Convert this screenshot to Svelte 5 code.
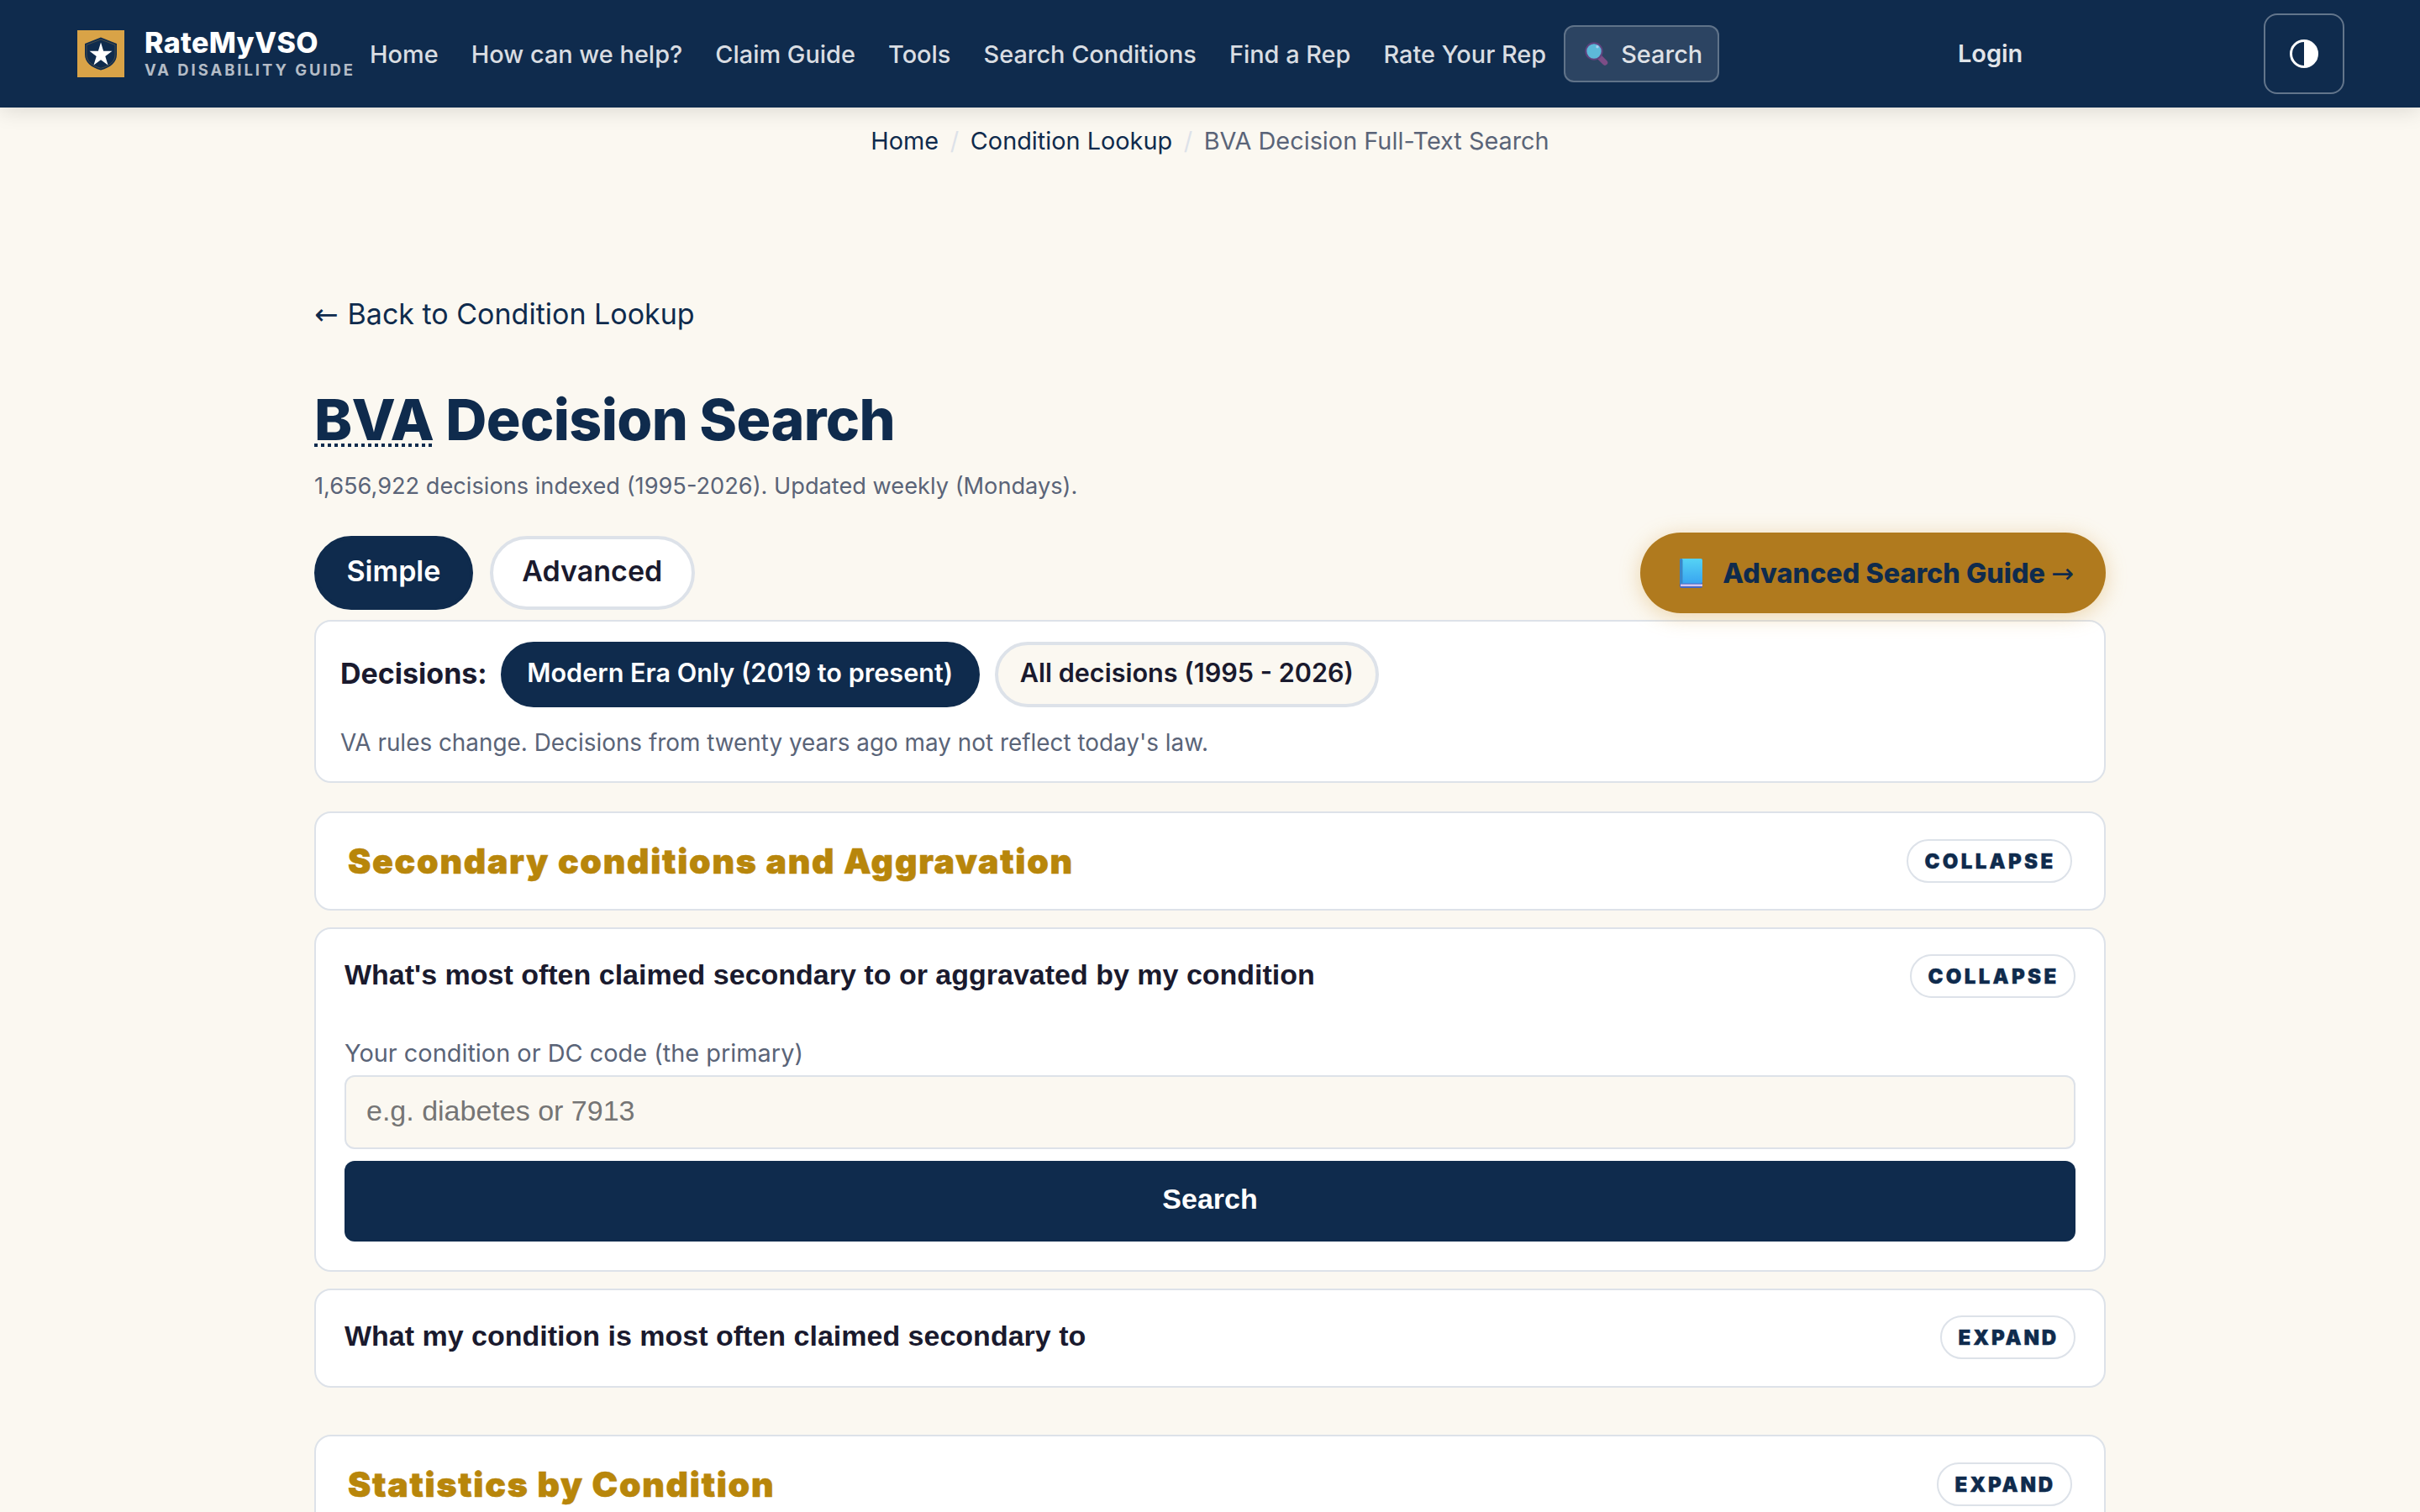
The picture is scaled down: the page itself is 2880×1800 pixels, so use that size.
<script lang="ts">
  const navLinks = ['Home', 'How can we help?', 'Claim Guide', 'Tools', 'Search Conditions', 'Find a Rep', 'Rate Your Rep']

  let mode = $state('simple')
  let era = $state('modern')
  let condition = $state('')
  let secondaryOpen = $state(true)
  let claimedOpen = $state(true)
  let reverseOpen = $state(false)
  let statsOpen = $state(false)
</script>

{#snippet toggle(open: boolean)}
  <span class="toggle" class:open>{open ? 'Collapse' : 'Expand'}</span>
{/snippet}

<header class="site-header">
  <a class="brand" href="#home">
    <svg class="brand-mark" width="56" height="56" viewBox="0 0 56 56">
      <rect width="56" height="56" fill="#d9a347" />
      <path d="M28 8.5 47 16v13c0 9-7.500 15.500-19 18.500C16.500 44.500 9 38 9 29V16Z" fill="#0f2b4d" />
      <path d="M28 11 45 17.500v11.500c0 8-6.500 13.500-17 16.300C17.500 42.500 11 37 11 29V17.500Z" fill="none" stroke="#d9a347" stroke-opacity="0.35" stroke-width="0.8" />
      <path d="m28 14.500 3.100 10.300h10.400l-8.200 6.200 3.200 10.500-8.500-6.300-8.500 6.300 3.200-10.500-8.200-6.200h10.400Z" fill="#fff" />
    </svg>
    <span class="brand-text">
      <span class="brand-name">RateMyVSO</span>
      <span class="brand-sub">VA DISABILITY GUIDE</span>
    </span>
  </a>
  <nav>
    {#each navLinks as link}
      <a class="nav-link" href="#nav">{link}</a>
    {/each}
    <a class="nav-search" href="#search">
      <svg width="30" height="30" viewBox="0 0 30 30">
        <path d="m18.500 19 6.500 6.500" stroke="#7d4d86" stroke-width="6.500" stroke-linecap="round" />
        <circle cx="12" cy="12" r="9.700" fill="#5db9d9" stroke="#60437f" stroke-width="2" />
        <circle cx="16" cy="6.800" r="1.700" fill="#a9cdee" />
      </svg>
      Search
    </a>
  </nav>
  <a class="login" href="#login">Login</a>
  <button class="contrast" aria-label="Toggle theme">
    <svg width="34" height="34" viewBox="0 0 34 34">
      <circle cx="17" cy="17" r="15.500" fill="none" stroke="#fff" stroke-width="3" />
      <path d="M17 1.500a15.500 15.500 0 0 1 0 31Z" fill="#fff" />
    </svg>
  </button>
</header>

<div class="breadcrumb">
  <a href="#home">Home</a>
  <span class="sep">/</span>
  <a href="#lookup">Condition Lookup</a>
  <span class="sep">/</span>
  <span>BVA Decision Full-Text Search</span>
</div>

<main>
  <a class="back" href="#lookup"><span class="arrow">←</span> Back to Condition Lookup</a>
  <h1><abbr>BVA</abbr> Decision Search</h1>
  <p class="indexed">1,656,922 decisions indexed (1995-2026). Updated weekly (Mondays).</p>

  <div class="modes">
    <button class="pill" class:active={mode === 'simple'} onclick={() => (mode = 'simple')}>Simple</button>
    <button class="pill" class:active={mode === 'advanced'} onclick={() => (mode = 'advanced')}>Advanced</button>
    <a class="guide" href="#guide">
      <svg width="27" height="35" viewBox="0 0 27 35">
        <defs>
          <linearGradient id="cover" x1="0" y1="0" x2="0" y2="1">
            <stop offset="0" stop-color="#55d3f5" />
            <stop offset="1" stop-color="#39a5f0" />
          </linearGradient>
        </defs>
        <rect width="27" height="35" rx="2.500" fill="#4467c4" />
        <rect x="1" y="30.500" width="26" height="2.500" fill="#d7c6ee" />
        <rect width="27" height="29.500" rx="2" fill="url(#cover)" />
        <rect width="3.500" height="30" rx="1.500" fill="#3a86c8" />
      </svg>
      <span>Advanced Search Guide <span class="arrow">→</span></span>
    </a>
  </div>

  <section class="card era">
    <div class="era-row">
      <strong>Decisions:</strong>
      <button class="pill small" class:active={era === 'modern'} onclick={() => (era = 'modern')}>Modern Era Only (2019 to present)</button>
      <button class="pill small" class:active={era === 'all'} onclick={() => (era = 'all')}>All decisions (1995 - 2026)</button>
    </div>
    <p>VA rules change. Decisions from twenty years ago may not reflect today's law.</p>
  </section>

  <button class="card group" onclick={() => (secondaryOpen = !secondaryOpen)}>
    <span class="group-title">Secondary conditions and Aggravation</span>
    {@render toggle(secondaryOpen)}
  </button>

  {#if secondaryOpen}
    <section class="card question" class:open={claimedOpen}>
      <button class="question-head" onclick={() => (claimedOpen = !claimedOpen)}>
        <span class="question-text">What's most often claimed secondary to or aggravated by my condition</span>
        {@render toggle(claimedOpen)}
      </button>
      {#if claimedOpen}
        <label for="primary">Your condition or DC code (the primary)</label>
        <input id="primary" type="text" placeholder="e.g. diabetes or 7913" bind:value={condition} />
        <button class="submit">Search</button>
      {/if}
    </section>

    <section class="card question" class:open={reverseOpen}>
      <button class="question-head" onclick={() => (reverseOpen = !reverseOpen)}>
        <span class="question-text">What my condition is most often claimed secondary to</span>
        {@render toggle(reverseOpen)}
      </button>
    </section>
  {/if}

  <button class="card group stats" onclick={() => (statsOpen = !statsOpen)}>
    <span class="group-title">Statistics by Condition</span>
    {@render toggle(statsOpen)}
  </button>
</main>

<style>
  :global(body) {
    background: #fbf8f1;
    color: #1a1a2e;
    font-family: Inter, sans-serif;
    font-size: 34px;
  }

  :global(#app) {
    height: 1800px;
    overflow: hidden;
  }

  * {
    box-sizing: border-box;
  }

  a {
    color: #0f2b4d;
    text-decoration: none;
  }

  button {
    font-family: inherit;
    border: 0;
    padding: 0;
    text-align: left;
  }

  p {
    margin: 0;
  }

  .site-header {
    display: flex;
    align-items: center;
    height: 128px;
    padding: 0 90px 0 92px;
    background: #0f2b4d;
    box-shadow: 0 4px 24px rgba(0, 0, 0, 0.12);
    white-space: nowrap;
  }

  .brand {
    display: flex;
    align-items: center;
    gap: 24px;
    width: 329px;
  }

  .brand-mark {
    flex-shrink: 0;
  }

  .brand-text {
    display: flex;
    flex-direction: column;
    color: #fff;
  }

  .brand-name {
    font-size: 34px;
    font-weight: 800;
    line-height: 38px;
    letter-spacing: 0.34px;
  }

  .brand-sub {
    font-size: 18.4px;
    font-weight: 700;
    line-height: 26px;
    letter-spacing: 2.98px;
    color: rgba(255, 255, 255, 0.7);
  }

  nav {
    display: flex;
    align-items: center;
    flex: 1;
  }

  .nav-link {
    padding: 0 20px 0 19.1px;
    font-size: 28.9px;
    font-weight: 500;
    color: rgba(255, 255, 255, 0.85);
  }

  .nav-search {
    display: flex;
    align-items: center;
    gap: 14px;
    height: 68px;
    margin-left: 1px;
    padding: 0 18px 0 22px;
    border: 2px solid rgba(255, 255, 255, 0.25);
    border-radius: 12px;
    background: rgba(255, 255, 255, 0.12);
    font-size: 28.9px;
    font-weight: 500;
    color: rgba(255, 255, 255, 0.85);
  }

  .login {
    width: 364px;
    font-size: 28.9px;
    font-weight: 600;
    line-height: 40px;
    color: rgba(255, 255, 255, 0.9);
  }

  .contrast {
    display: flex;
    align-items: center;
    justify-content: center;
    width: 96px;
    height: 96px;
    border: 2px solid rgba(255, 255, 255, 0.35);
    border-radius: 16px;
    background: none;
  }

  .breadcrumb {
    display: flex;
    justify-content: center;
    gap: 13.6px;
    padding-top: 20px;
    font-size: 28.85px;
    line-height: 40px;
    color: #5a6478;
  }

  .sep {
    color: #dde2e9;
  }

  main {
    width: 2132px;
    margin: 0 auto;
  }

  .back {
    display: block;
    margin-top: 162px;
    line-height: 48px;
  }

  .arrow {
    font-family: 'DejaVu Sans', sans-serif;
    font-weight: 400;
    line-height: 1;
  }

  .back .arrow {
    margin-right: 1.5px;
  }

  h1 {
    margin: 59px 0 0;
    font-size: 68px;
    font-weight: 800;
    line-height: 84px;
    letter-spacing: -0.68px;
    color: #0f2b4d;
  }

  abbr {
    background: repeating-linear-gradient(90deg, #0f2b4d 0 4px, transparent 4px 8px) 0 calc(100% - 8px) / 100% 4px no-repeat;
  }

  .indexed {
    margin-top: 18px;
    font-size: 27.2px;
    line-height: 40px;
    color: #5a6478;
  }

  .modes {
    display: flex;
    align-items: center;
    gap: 20px;
    height: 96px;
    margin-top: 35px;
  }

  .pill {
    height: 88px;
    padding: 0 34.500px 5px;
    border: 4px solid #dde2e9;
    border-radius: 44px;
    background: #fff;
    font-size: 34px;
    font-weight: 600;
    color: #1a1a2e;
  }

  .pill.small {
    height: 78px;
    padding: 0 26px 5px;
    background: #fbf8f1;
    font-size: 30.6px;
  }

  .pill.active {
    border-color: #0f2b4d;
    background: #0f2b4d;
    color: #fff;
  }

  .pill.small.active {
    padding: 0 27.500px 5px;
  }

  .guide {
    display: flex;
    align-items: center;
    gap: 24px;
    height: 96px;
    margin-left: auto;
    padding: 0 38px 0 47px;
    border-radius: 48px;
    background: #b07a1e;
    box-shadow: 0 4px 24px rgba(217, 163, 71, 0.4);
    font-size: 32.3px;
    font-weight: 800;
    position: relative;
    z-index: 1;
  }

  .card {
    width: 100%;
    border: 2px solid #dde2e9;
    border-radius: 20px;
    background: #fff;
  }

  .era {
    height: 194px;
    margin-top: 8px;
    padding: 24px 29px;
  }

  .era-row {
    display: flex;
    align-items: center;
    gap: 18px;
  }

  .era-row strong {
    margin-right: -2px;
    padding-bottom: 3px;
  }

  .era p {
    margin-top: 22px;
    font-size: 27.88px;
    line-height: 40px;
    color: #5a6478;
  }

  .group {
    display: flex;
    align-items: center;
    justify-content: space-between;
    height: 118px;
    margin-top: 34px;
    padding: 0 38px;
  }

  .group-title {
    font-family: 'Arial Black', Inter, sans-serif;
    font-size: 41px;
    font-weight: 900;
    letter-spacing: 1.72px;
    -webkit-text-stroke: 0.6px #b8860b;
    color: #b8860b;
  }

  .toggle {
    display: flex;
    align-items: center;
    height: 52px;
    padding: 0 18px 0 20px;
    border: 2px solid #dde2e9;
    border-radius: 26px;
    font-family: 'Arial Black', Inter, sans-serif;
    font-size: 24px;
    font-weight: 900;
    letter-spacing: 2.9px;
    -webkit-text-stroke: 0.4px #0f2b4d;
    text-transform: uppercase;
    color: #0f2b4d;
  }

  .toggle.open {
    padding: 0 17.500px 0 19px;
    letter-spacing: 3.35px;
  }

  .question {
    height: 118px;
    margin-top: 20px;
    padding: 30px 34px 0;
  }

  .question.open {
    height: 410px;
  }

  .question-head {
    display: flex;
    justify-content: space-between;
    width: 100%;
    background: none;
    font-family: 'Liberation Sans', Arial, sans-serif;
    font-size: 34px;
    font-weight: 700;
    color: #1a1a2e;
  }

  .question-text {
    padding-top: 5px;
  }

  label {
    display: block;
    margin-top: 46px;
    font-size: 28.9px;
    line-height: 40px;
    color: #5a6478;
  }

  input {
    display: block;
    width: 100%;
    height: 88px;
    margin-top: 6px;
    padding: 0 24px 3px;
    border: 2px solid #dde2e9;
    border-radius: 12px;
    background: #fbf8f1;
    font-family: 'Liberation Sans', Arial, sans-serif;
    font-size: 34px;
  }

  input::placeholder {
    color: #757575;
  }

  .submit {
    width: 100%;
    height: 96px;
    margin-top: 14px;
    padding-bottom: 5px;
    border-radius: 12px;
    background: #0f2b4d;
    font-family: 'Liberation Sans', Arial, sans-serif;
    font-size: 34px;
    font-weight: 700;
    text-align: center;
    color: #fff;
  }

  .stats {
    margin-top: 56px;
  }
</style>
